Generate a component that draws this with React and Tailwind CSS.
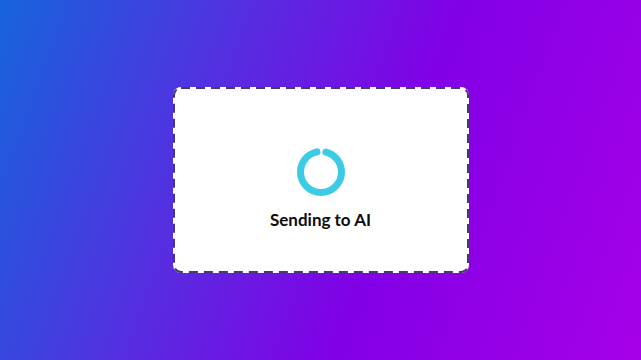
export default function App() {
  return (
    <div className="w-[641px] h-[360px] flex items-center justify-center bg-[linear-gradient(110deg,#1664dc_0%,#5a2ae0_35%,#8200e6_60%,#a600e8_100%)]">
      <div className="relative w-[296px] h-[186px] bg-white rounded-[8px] flex flex-col items-center pt-[61px]">
        <svg className="absolute inset-0 pointer-events-none" width="296" height="186" viewBox="0 0 296 186">
          <rect
            x="1"
            y="1"
            width="294"
            height="184"
            rx="7"
            ry="7"
            fill="none"
            stroke="#4b3479"
            strokeWidth="2"
            strokeDasharray="9 6"
          />
        </svg>
        <svg width="48" height="48" viewBox="0 0 48 48">
          <circle
            cx="24"
            cy="24"
            r="20.5"
            fill="none"
            stroke="#3ccbe5"
            strokeWidth="7"
            strokeLinecap="round"
            strokeDasharray="118.8 10"
            strokeDashoffset="-5"
            transform="rotate(-90 24 24)"
          />
        </svg>
        <div className="mt-[12px] text-[17px] leading-[24px] font-bold text-[#0d0d0d] font-['Lato',sans-serif]">
          Sending to AI
        </div>
      </div>
    </div>
  );
}
